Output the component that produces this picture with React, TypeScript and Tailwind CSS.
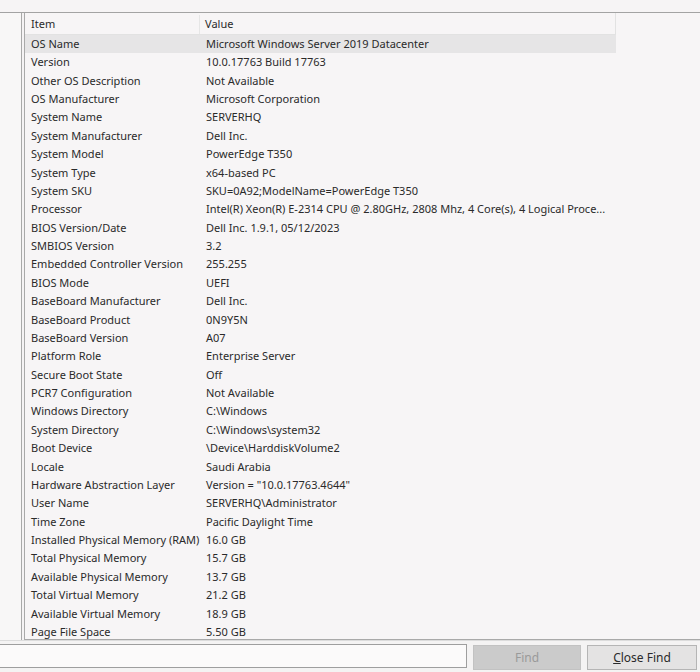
import React from "react";

const rows: [string, string][] = [
  ["OS Name", "Microsoft Windows Server 2019 Datacenter"],
  ["Version", "10.0.17763 Build 17763"],
  ["Other OS Description", "Not Available"],
  ["OS Manufacturer", "Microsoft Corporation"],
  ["System Name", "SERVERHQ"],
  ["System Manufacturer", "Dell Inc."],
  ["System Model", "PowerEdge T350"],
  ["System Type", "x64-based PC"],
  ["System SKU", "SKU=0A92;ModelName=PowerEdge T350"],
  ["Processor", "Intel(R) Xeon(R) E-2314 CPU @ 2.80GHz, 2808 Mhz, 4 Core(s), 4 Logical Proce..."],
  ["BIOS Version/Date", "Dell Inc. 1.9.1, 05/12/2023"],
  ["SMBIOS Version", "3.2"],
  ["Embedded Controller Version", "255.255"],
  ["BIOS Mode", "UEFI"],
  ["BaseBoard Manufacturer", "Dell Inc."],
  ["BaseBoard Product", "0N9Y5N"],
  ["BaseBoard Version", "A07"],
  ["Platform Role", "Enterprise Server"],
  ["Secure Boot State", "Off"],
  ["PCR7 Configuration", "Not Available"],
  ["Windows Directory", "C:\\Windows"],
  ["System Directory", "C:\\Windows\\system32"],
  ["Boot Device", "\\Device\\HarddiskVolume2"],
  ["Locale", "Saudi Arabia"],
  ["Hardware Abstraction Layer", 'Version = "10.0.17763.4644"'],
  ["User Name", "SERVERHQ\\Administrator"],
  ["Time Zone", "Pacific Daylight Time"],
  ["Installed Physical Memory (RAM)", "16.0 GB"],
  ["Total Physical Memory", "15.7 GB"],
  ["Available Physical Memory", "13.7 GB"],
  ["Total Virtual Memory", "21.2 GB"],
  ["Available Virtual Memory", "18.9 GB"],
  ["Page File Space", "5.50 GB"],
];

export default function App() {
  return (
    <div
      className="w-[700px] h-[672px] overflow-hidden bg-[#f5f3f4] flex flex-col text-[#2a2a2a] text-[11px]"
      style={{ fontFamily: '"Noto Sans", "Open Sans", sans-serif' }}
    >
      <div className="h-[13px] shrink-0 border-b border-[#a3a3a3] bg-[#f6f4f5]" />
      <div className="flex h-[627px] shrink-0">
        <div className="w-[22px] shrink-0 bg-[#f8f7f7] border-r border-[#a9a9a9]" />
        <div className="w-[2px] shrink-0" />
        <div className="flex-1 border-l border-b border-[#a9a9a9] bg-[#f7f5f6] overflow-hidden">
          <div className="w-[591px] flex h-[22px] pt-[2px] border-b border-r border-[#e2e2e2]">
            <div className="w-[175px] pl-[6px] flex items-center border-r border-[#e6e6e6]">Item</div>
            <div className="flex-1 pl-[5px] flex items-center">Value</div>
          </div>
          {rows.map(([k, v], i) => (
            <div
              key={k}
              className={`w-[591px] flex h-[18.375px] items-center ${i === 0 ? "bg-[#e6e5e6]" : ""}`}
            >
              <div className="w-[175px] pl-[6px] whitespace-nowrap overflow-hidden">{k}</div>
              <div className="flex-1 pl-[6px] whitespace-nowrap overflow-hidden">{v}</div>
            </div>
          ))}
        </div>
      </div>
      <div className="flex-1 flex items-start pt-[3px] gap-[6px] bg-[#f4f3f3] border-t border-[#dcdcdc]">
        <div className="w-[467px] h-[24px] bg-[#fbfafa] border border-l-0 border-[#9e9e9e]" />
        <div className="w-[108px] h-[25px] mt-[1px] bg-[#cbcbcb] border border-[#c2c2c2] flex items-center justify-center text-[#9a9a9a] text-[12px]">
          Find
        </div>
        <div className="w-[110px] h-[25px] mt-[1px] bg-[#e4e3e3] border border-[#b5b5b5] flex items-center justify-center text-[12px] text-[#2a2a2a]">
          <span><span className="underline">C</span>lose Find</span>
        </div>
      </div>
    </div>
  );
}
